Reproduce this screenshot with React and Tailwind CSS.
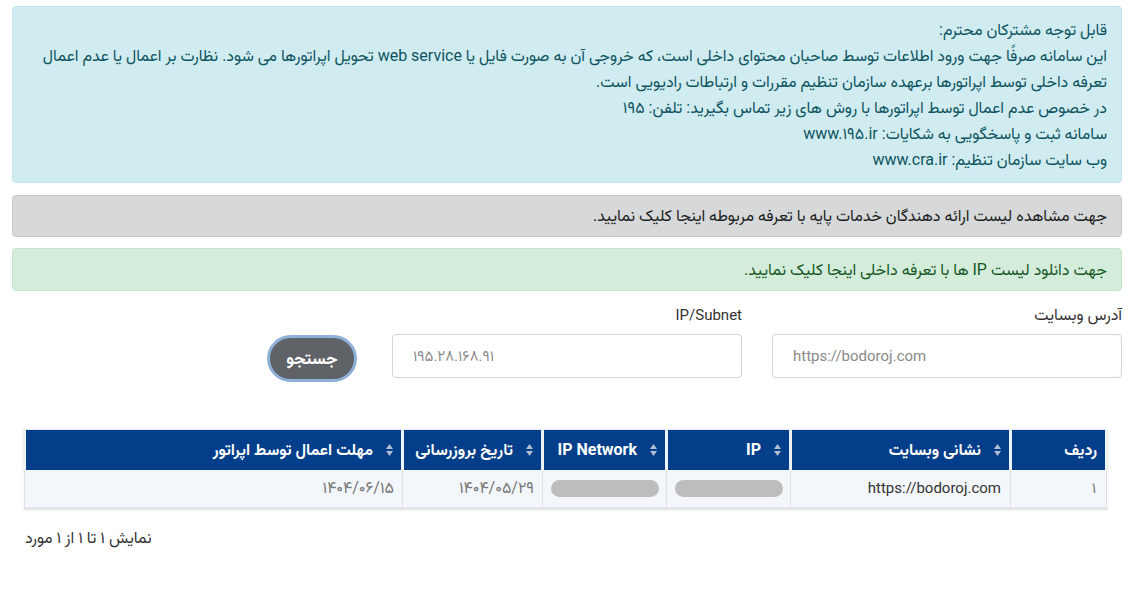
import { useState } from 'react'

const fa = { fontFamily: 'Roboto, "Vazirmatn", "Noto Sans Arabic", "DejaVu Sans", sans-serif' }

function SortIcon() {
  return (
    <svg width="7" height="14" viewBox="0 0 7 14" className="absolute right-[8px] top-1/2 -translate-y-1/2">
      <path d="M0 6 L3.5 1 L7 6 Z" fill="#b3bdd0" />
      <path d="M0 8 L7 8 L3.5 13 Z" fill="#b3bdd0" />
    </svg>
  )
}

const columns = [
  { key: 'row', label: 'ردیف', width: 'w-[96px]', sort: false },
  { key: 'site', label: 'نشانی وبسایت', width: 'w-[220px]', sort: true },
  { key: 'ip', label: 'IP', width: 'w-[124px]', sort: true },
  { key: 'net', label: 'IP Network', width: 'w-[124px]', sort: true },
  { key: 'updated', label: 'تاریخ بروزرسانی', width: 'w-[140px]', sort: true },
  { key: 'deadline', label: 'مهلت اعمال توسط اپراتور', width: 'w-[378px]', sort: true },
]

function BlurredValue() {
  return (
    <div className="flex justify-center">
      <div className="h-[17px] w-[108px] rounded-full bg-[#bdbdbd] blur-[0.6px]" />
    </div>
  )
}

export default function App() {
  const [site, setSite] = useState('')
  const [ip, setIp] = useState('')

  return (
    <div dir="rtl" className="min-h-[597px] bg-white pl-3 pr-4 pt-1.5 text-[16px]" style={fa}>
      {/* اطلاعیه */}
      <div className="rounded border border-[#bee5eb] bg-[#d1ecf1] px-[14px] pb-[9px] pt-[10px] text-[16px] leading-[26px] text-[#0c5460]">
        <div>قابل توجه مشترکان محترم:</div>
        <div>
          این سامانه صرفًا جهت ورود اطلاعات توسط صاحبان محتوای داخلی است، که خروجی آن به صورت فایل یا web service تحویل اپراتورها می شود. نظارت بر اعمال یا عدم اعمال
          <br />
          تعرفه داخلی توسط اپراتورها برعهده سازمان تنظیم مقررات و ارتباطات رادیویی است.
        </div>
        <div>در خصوص عدم اعمال توسط اپراتورها با روش های زیر تماس بگیرید: تلفن: ۱۹۵</div>
        <div>سامانه ثبت و پاسخگویی به شکایات: www.۱۹۵.ir</div>
        <div>وب سایت سازمان تنظیم: www.cra.ir</div>
      </div>

      <div className="mt-3 rounded border border-[#c6c8ca] bg-[#d6d8d9] px-[14px] py-[10px] leading-[20px] text-[#1b1e21]">
        جهت مشاهده لیست ارائه دهندگان خدمات پایه با تعرفه مربوطه اینجا کلیک نمایید.
      </div>

      <div className="mt-[11px] rounded border border-[#c3e6cb] bg-[#d4edda] px-[14px] py-[10px] leading-[21px] text-[#155724]">
        جهت دانلود لیست IP ها با تعرفه داخلی اینجا کلیک نمایید.
      </div>

      {/* فرم جستجو */}
      <div className="mt-[14px] grid grid-cols-3 gap-[30px]">
        <div>
          <label className="mb-[9px] block leading-[20px] text-[#333]">آدرس وبسایت</label>
          <input
            dir="ltr"
            value={site}
            onChange={e => setSite(e.target.value)}
            placeholder="https://bodoroj.com"
            className="h-[44px] w-full rounded border border-[#ced4da] bg-white px-5 text-[15px] text-[#495057] outline-none placeholder:text-[#8a8a8a]"
          />
        </div>
        <div>
          <label className="mb-[9px] block text-[15px] leading-[20px] text-[#333]">IP/Subnet</label>
          <input
            dir="ltr"
            value={ip}
            onChange={e => setIp(e.target.value)}
            placeholder="۱۹۵.۲۸.۱۶۸.۹۱"
            className="h-[44px] w-full rounded border border-[#ced4da] bg-white px-5 text-[15px] text-[#495057] outline-none placeholder:text-[#8a8a8a]"
          />
        </div>
        <div className="pr-[5px] pt-[30px]">
          <button className="h-[47px] w-[90px] rounded-full border-[3px] border-[#8fb0da] bg-[#5f6266] text-[17px] font-bold text-white">
            جستجو
          </button>
        </div>
      </div>

      {/* جدول */}
      <div className="mt-[47px] px-[14px]">
        <table className="w-full table-fixed border-collapse border border-[#e3e8ee] shadow-[0_2px_2px_rgba(0,0,0,0.12)]">
          <thead>
            <tr className="bg-[#023e8a]">
              {columns.map(col => (
                <th
                  key={col.key}
                  className={`${col.width} relative h-[40px] border-x-[3px] border-[#eef3f8] text-right text-[16px] font-bold text-white ${col.sort ? 'pr-[28px]' : 'pr-[8px]'}`}
                >
                  {col.sort && <SortIcon />}
                  {col.label}
                </th>
              ))}
            </tr>
          </thead>
          <tbody>
            <tr className="bg-[#f3f6fa] text-[15px]">
              <td className="h-[38px] border-x border-[#dee2e6] pr-[10px] text-right text-[#777]">۱</td>
              <td className="border-x border-[#dee2e6] pr-[9px] text-right text-[#333]">https://bodoroj.com</td>
              <td className="border-x border-[#dee2e6]"><BlurredValue /></td>
              <td className="border-x border-[#dee2e6]"><BlurredValue /></td>
              <td className="border-x border-[#dee2e6] pr-[8px] text-right text-[16px] text-[#777]">۱۴۰۴/۰۵/۲۹</td>
              <td className="border-x border-[#dee2e6] pr-[8px] text-right text-[16px] text-[#777]">۱۴۰۴/۰۶/۱۵</td>
            </tr>
          </tbody>
        </table>
      </div>

      <div className="mt-[18px] pl-[13px] text-left leading-[24px] text-[#333]">نمایش ۱ تا ۱ از ۱ مورد</div>
    </div>
  )
}
